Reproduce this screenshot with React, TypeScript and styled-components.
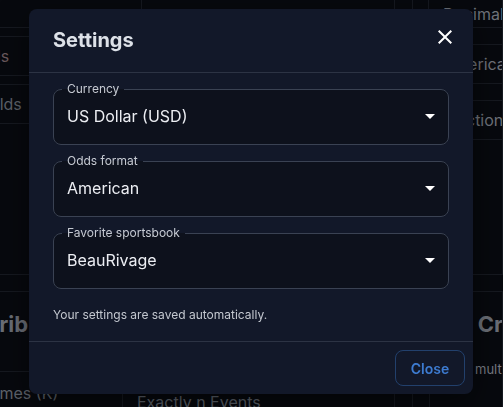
import React from "react";
import styled, { createGlobalStyle } from "styled-components";

const Global = createGlobalStyle`
  html, body { margin: 0; padding: 0; background: #07090e; }
  body { font-family: Inter, "Noto Sans", "Liberation Sans", sans-serif; }
  * { box-sizing: border-box; }
`;

/* ---------- dimmed page behind the dialog ---------- */

const Page = styled.div`
  width: 503px;
  height: 407px;
  overflow: hidden;
  display: flex;
  flex-direction: column;
  background: #07090e;
  color: #5e636c;
`;

const Section = styled.div<{ cols: string; h: number }>`
  display: grid;
  grid-template-columns: ${(p) => p.cols};
  height: ${(p) => p.h}px;
  flex: none;
  border-bottom: 1px solid #161920;
`;

const Col = styled.div`
  display: flex;
  flex-direction: column;
  border-right: 1px solid #161920;
  overflow: hidden;
  min-width: 0;
`;

const Row = styled.div<{ h: number; line?: boolean }>`
  height: ${(p) => p.h}px;
  flex: none;
  display: flex;
  align-items: center;
  padding-left: 14px;
  border-bottom: ${(p) => (p.line ? "1px solid #161920" : "none")};
  white-space: nowrap;
`;

const BgText = styled.span<{ indent?: number; tone?: string; size?: number; bold?: boolean }>`
  margin-left: ${(p) => p.indent ?? 0}px;
  color: ${(p) => p.tone ?? "#5e636c"};
  font-size: ${(p) => p.size ?? 16}px;
  font-weight: ${(p) => (p.bold ? 700 : 400)};
`;

const Band = styled.div`
  height: 17px;
  flex: none;
  border-bottom: 1px solid #161920;
`;

/* ---------- dialog ---------- */

const Overlay = styled.div`
  position: fixed;
  inset: 0;
  display: flex;
  justify-content: center;
  align-items: flex-start;
  padding: 9px 1px 0 0;
`;

const Dialog = styled.div`
  width: 444px;
  background: #121829;
  border-radius: 8px;
  box-shadow: 0 10px 30px rgba(0, 0, 0, 0.5);
  display: flex;
  flex-direction: column;
  color: #e6e9ef;
`;

const Header = styled.div`
  display: flex;
  align-items: center;
  justify-content: space-between;
  padding: 15px 12px 16px 24px;
  border-bottom: 1px solid #2c3344;
`;

const Title = styled.h2`
  margin: 0;
  font-size: 20px;
  line-height: 32px;
  font-weight: 700;
  color: #dde1e8;
`;

const IconButton = styled.button`
  width: 32px;
  height: 32px;
  margin-top: -6px;
  padding: 0;
  border: none;
  background: transparent;
  color: #ffffff;
  display: flex;
  align-items: center;
  justify-content: center;
  cursor: pointer;
`;

const Content = styled.div`
  padding: 9px 24px 16px;
  display: flex;
  flex-direction: column;
  gap: 9px;
`;

const Field = styled.fieldset`
  margin: 0;
  min-width: 0;
  padding: 0 6px 8px 8px;
  border: 1px solid #3a4253;
  border-radius: 8px;
  background: #0d111c;
`;

const Legend = styled.legend`
  padding: 0 5px;
  font-size: 12px;
  line-height: 14px;
  color: #c6cad2;
`;

const Value = styled.div`
  height: 40px;
  display: flex;
  align-items: center;
  justify-content: space-between;
  padding-left: 5px;
  font-size: 16px;
  color: #eceef3;
`;

const Note = styled.p`
  margin: 7px 0 0;
  font-size: 12px;
  line-height: 20px;
  color: #c3c7cf;
`;

const Footer = styled.div`
  display: flex;
  justify-content: flex-end;
  padding: 8px 8px;
  border-top: 1px solid #2c3344;
`;

const TextButton = styled.button`
  height: 36px;
  width: 70px;
  border: 1px solid #22406c;
  border-radius: 8px;
  background: transparent;
  color: #3d7bd0;
  font-family: inherit;
  font-size: 14px;
  font-weight: 600;
  cursor: pointer;
`;

const Caret = () => (
  <svg width="24" height="24" viewBox="0 0 24 24" fill="#ffffff">
    <path d="M7 10l5 5 5-5z" />
  </svg>
);

const CloseIcon = () => (
  <svg width="24" height="24" viewBox="0 0 24 24" fill="#ffffff">
    <path d="M19 6.41 17.59 5 12 10.59 6.41 5 5 6.41 10.59 12 5 17.59 6.41 19 12 13.41 17.59 19 19 17.59 13.41 12z" />
  </svg>
);

const fields = [
  { label: "Currency", value: "US Dollar (USD)" },
  { label: "Odds format", value: "American" },
  { label: "Favorite sportsbook", value: "BeauRivage" },
];

export default function App() {
  return (
    <>
      <Global />
      <Page>
        <Section cols="142px 253px 18px 16px 1fr" h={275}>
          <Col>
            <Row h={28} line />
            <Row h={9} line />
            <Row h={39} line>
              <BgText indent={-50} tone="#6a585c">Totals</BgText>
            </Row>
            <Row h={9} line />
            <Row h={39} line>
              <BgText indent={-37} tone="#5c6068">Fields</BgText>
            </Row>
          </Col>
          <Col>
            <Row h={28} line />
          </Col>
          <Col>
            <Row h={28} line />
          </Col>
          <Col>
            <Row h={28} line />
          </Col>
          <Col>
            <Row h={28} line>
              <BgText tone="#6f737b">Decimal</BgText>
            </Row>
            <Row h={17} line />
            <Row h={39} line>
              <BgText tone="#6f737b">American</BgText>
            </Row>
            <Row h={17} line />
            <Row h={39} line>
              <BgText indent={-1} tone="#6f737b">Fraction</BgText>
            </Row>
          </Col>
        </Section>
        <Band />
        <Section cols="123px 272px 18px 17px 1fr" h={120}>
          <Col>
            <Row h={64}>
              <BgText indent={-57} size={22} bold tone="#6a6e76">Distrib</BgText>
            </Row>
            <Row h={16} line />
            <Row h={42}>
              <BgText indent={-60} tone="#5e636c">Outcomes (K)</BgText>
            </Row>
          </Col>
          <Col>
            <Row h={98} />
            <Row h={24}>
              <BgText tone="#5e636c">Exactly n Events</BgText>
            </Row>
          </Col>
          <Col />
          <Col />
          <Col>
            <Row h={64}>
              <BgText indent={-88} size={22} bold tone="#6a6e76">Probability Cr</BgText>
            </Row>
            <Row h={26}>
              <BgText indent={31} size={13} tone="#777b84">multiple</BgText>
            </Row>
          </Col>
        </Section>
      </Page>

      <Overlay>
        <Dialog role="dialog" aria-label="Settings">
          <Header>
            <Title>Settings</Title>
            <IconButton aria-label="Close">
              <CloseIcon />
            </IconButton>
          </Header>
          <Content>
            {fields.map((f) => (
              <Field key={f.label}>
                <Legend>{f.label}</Legend>
                <Value>
                  <span>{f.value}</span>
                  <Caret />
                </Value>
              </Field>
            ))}
            <Note>Your settings are saved automatically.</Note>
          </Content>
          <Footer>
            <TextButton>Close</TextButton>
          </Footer>
        </Dialog>
      </Overlay>
    </>
  );
}
